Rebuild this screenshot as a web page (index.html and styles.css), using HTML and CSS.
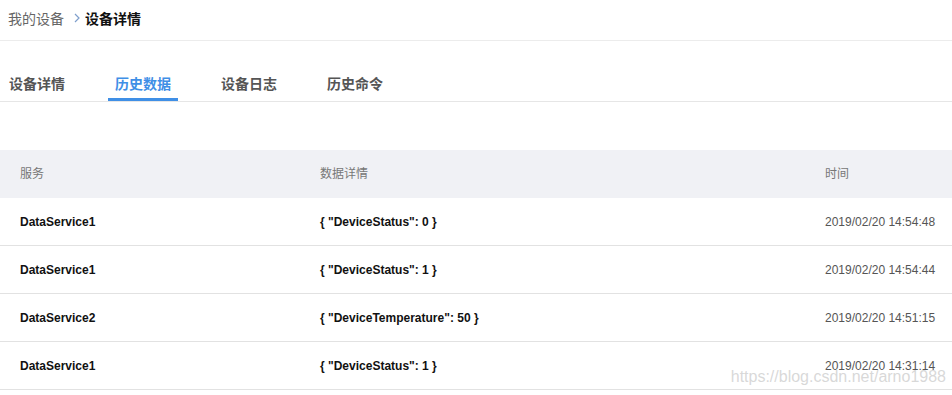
FILE: index.html
```html
<!DOCTYPE html>
<html lang="zh-CN">
<head>
    <meta charset="UTF-8">
    <meta name="viewport" content="width=device-width, initial-scale=1.0">
    <title>设备详情</title>
    <link rel="stylesheet" href="styles.css">
</head>
<body>
    <div class="crumbs">
        <span class="crumb-link">我的设备</span>
        <svg class="crumb-sep" width="8" height="12" viewBox="0 0 8 12">
            <path d="M2 2 L6 6 L2 10" fill="none" stroke="#7f9fcc" stroke-width="1.2"/>
        </svg>
        <span class="crumb-current">设备详情</span>
    </div>

    <nav class="tabs">
        <a class="tab">设备详情</a>
        <a class="tab active">历史数据</a>
        <a class="tab">设备日志</a>
        <a class="tab">历史命令</a>
    </nav>

    <div class="table">
        <div class="row head">
            <div>服务</div>
            <div>数据详情</div>
            <div>时间</div>
        </div>
        <div class="row">
            <div class="strong">DataService1</div>
            <div class="strong">{ "DeviceStatus": 0 }</div>
            <div class="time">2019/02/20 14:54:48</div>
        </div>
        <div class="row">
            <div class="strong">DataService1</div>
            <div class="strong">{ "DeviceStatus": 1 }</div>
            <div class="time">2019/02/20 14:54:44</div>
        </div>
        <div class="row">
            <div class="strong">DataService2</div>
            <div class="strong">{ "DeviceTemperature": 50 }</div>
            <div class="time">2019/02/20 14:51:15</div>
        </div>
        <div class="row">
            <div class="strong">DataService1</div>
            <div class="strong">{ "DeviceStatus": 1 }</div>
            <div class="time">2019/02/20 14:31:14</div>
        </div>
    </div>

    <div class="watermark">https://blog.csdn.net/arno1988</div>
</body>
</html>
```

FILE: styles.css
```css
body {
    margin: 0;
    font-family: "Liberation Sans", "Noto Sans CJK SC", sans-serif;
    color: #333;
    background: #fff;
    position: relative;
    min-height: 395px;
}

.crumbs {
    display: flex;
    align-items: center;
    height: 36px;
    padding: 0 8px 4px;
    border-bottom: 1px solid #ececec;
    font-size: 14px;
}

.crumb-link {
    color: #666;
}

.crumb-sep {
    margin: 0 4px 0 9px;
}

.crumb-current {
    color: #111;
    font-weight: bold;
}

.tabs {
    display: flex;
    gap: 36px;
    margin-top: 33px;
    padding-left: 2px;
    border-bottom: 1px solid #e6e6e6;
}

.tab {
    padding: 0 7px 4px;
    line-height: 20px;
    font-size: 14px;
    font-weight: bold;
    color: #555;
    border-bottom: 3px solid transparent;
}

.tab.active {
    color: #3f8fe6;
    border-bottom-color: #3f8fe6;
}

.table {
    margin-top: 48px;
    font-size: 12px;
}

.row {
    display: grid;
    grid-template-columns: 300px 505px 1fr;
    align-items: center;
    box-sizing: border-box;
    height: 48px;
    padding: 0 0 0 20px;
    border-bottom: 1px solid #e2e2e2;
    color: #111;
    white-space: nowrap;
}

.row.head {
    padding-bottom: 3px;
    background: #f0f1f5;
    border-bottom: none;
    color: #777;
}

.strong {
    font-weight: bold;
}

.time {
    color: #555;
}

.watermark {
    position: absolute;
    right: 6px;
    top: 368px;
    font-size: 16px;
    color: rgba(190, 190, 190, 0.6);
}
```
